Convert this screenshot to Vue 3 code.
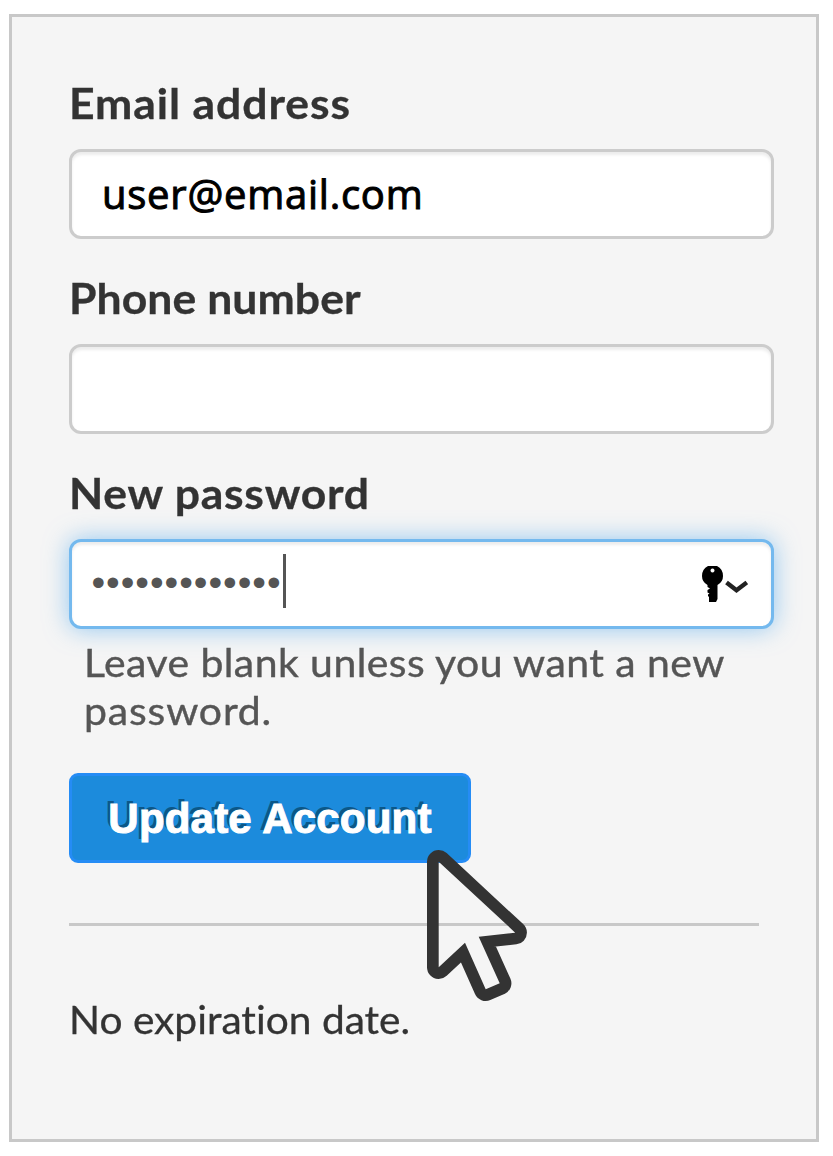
<script setup>
const passwordMask = '•'.repeat(13)
</script>

<template>
  <main class="card">
    <section class="field">
      <div class="label email-label">Email address</div>
      <div class="input"><span class="email">user@email.com</span></div>
    </section>
    <section class="field">
      <div class="label phone-label">Phone number</div>
      <div class="input"></div>
    </section>
    <section class="field">
      <div class="label pass-label">New password</div>
      <div class="input focused">
        <span class="dots">{{ passwordMask }}</span>
        <span class="caret"></span>
        <svg class="key" width="46" height="37" viewBox="0 0 46 37">
          <path fill="#000" fill-rule="evenodd" d="M6 0h9q6 3 6 10q0 6-5.500 9V33l-1.500 3H7V31l-1-1V28.500l1.500-1L5.500 26.500V24L8 22.500L5.500 21V19Q0 16 0 10Q0 3 6 0ZM10.500 2.600a2 2 0 1 0 .01 0Z" />
          <path fill="none" stroke="#222" stroke-width="4.400" d="M24.500 16.500l10 7.800L44.800 16.500" />
        </svg>
      </div>
    </section>
    <p class="help"><span class="help-a">Leave blank unless you want a new</span><br><span class="help-b">password.</span></p>
    <div class="action">
      <button class="button" type="button">Update Account</button>
      <svg class="cursor" width="104" height="156" viewBox="425 848 104 156">
        <mask id="pointer-ring" maskUnits="userSpaceOnUse" x="420" y="840" width="120" height="170">
          <rect x="420" y="840" width="120" height="170" fill="#fff" />
          <path fill="#000" d="M438.700 861.700L515.200 932.700L478.700 936.700L499.700 983.300L485.700 989.300L465 942.700L438.700 967.300Z" />
        </mask>
        <path mask="url(#pointer-ring)" fill="#333" stroke="#333" stroke-width="23.400" stroke-linejoin="round" d="M438.700 861.700L515.200 932.700L478.700 936.700L499.700 983.300L485.700 989.300L465 942.700L438.700 967.300Z" />
      </svg>
    </div>
    <hr class="rule">
    <p class="note">No expiration date.</p>
  </main>
</template>

<style>
body { background: #fff; }
</style>

<style scoped>
.card {
  box-sizing: border-box;
  width: 810px;
  height: 1128px;
  margin: 14px 0 0 9px;
  padding: 56px 42px 0 57px;
  border: 3px solid #c8c8c8;
  background: #f5f5f5;
  font-family: Lato, "Open Sans", sans-serif;
  font-variant-ligatures: none;
  color: #333;
  display: flow-root;
}
.field { margin-bottom: 29px; }
.label {
  height: 60px;
  margin-bottom: 16px;
  font-size: 42px;
  line-height: 60px;
  font-weight: 700;
  white-space: nowrap;
  transform: scaleX(1.06);
  transform-origin: 0 0;
  -webkit-text-stroke: .3px #333;
}
.email-label { letter-spacing: .85px; }
.phone-label { letter-spacing: .05px; }
.pass-label { letter-spacing: .7px; }
.input {
  box-sizing: border-box;
  position: relative;
  width: 705px;
  height: 90px;
  border: 3px solid #ccc;
  border-radius: 12px;
  background: #fff;
  box-shadow: inset 0 3px 3px rgba(0, 0, 0, .075);
  display: flex;
  align-items: center;
}
.focused {
  border-color: #74b9ee;
  box-shadow: inset 0 3px 3px rgba(0, 0, 0, .075), 0 0 24px rgba(82, 168, 236, .6);
}
.email {
  margin-left: 30px;
  font: 500 40px/84px "Open Sans", sans-serif;
  letter-spacing: .75px;
  -webkit-text-stroke: 1px #000;
  color: #000;
}
.dots {
  margin: -2px 0 0 19.500px;
  font: 39px/84px "Liberation Sans", sans-serif;
  letter-spacing: .97px;
  color: #555;
}
.caret { width: 3px; height: 54px; margin: -6px 0 0 1px; background: #555; }
.key { margin-left: auto; margin-right: 23px; }
.help {
  margin: -20px 0 0 15px;
  font-size: 39px;
  line-height: 48px;
  color: #555;
  white-space: nowrap;
  transform: scaleX(1.05);
  transform-origin: 0 0;
  -webkit-text-stroke: .4px #555;
}
.help-a { letter-spacing: .42px; }
.help-b { letter-spacing: .8px; }
.action { position: relative; height: 90px; margin-top: 39px; }
.button {
  box-sizing: border-box;
  display: block;
  width: 402px;
  height: 90px;
  padding: 1px 0 0;
  border: 3px solid #258cf5;
  border-radius: 9px;
  background: #1c8bdc;
  color: #fff;
  font: 700 42px/84px "Liberation Sans", sans-serif;
  letter-spacing: .2px;
  text-shadow: -3px -3px 0 #0b5788;
  -webkit-text-stroke: 1px #fff;
}
.cursor { position: absolute; left: 356px; top: 75px; }
.rule { width: 690px; height: 3px; margin: 60px 0 69px; border: 0; background: #c8c8c8; }
.note {
  margin: 0;
  font-size: 39px;
  line-height: 48px;
  white-space: nowrap;
  transform: scaleX(1.043);
  transform-origin: 0 0;
  -webkit-text-stroke: .3px #333;
}
</style>
